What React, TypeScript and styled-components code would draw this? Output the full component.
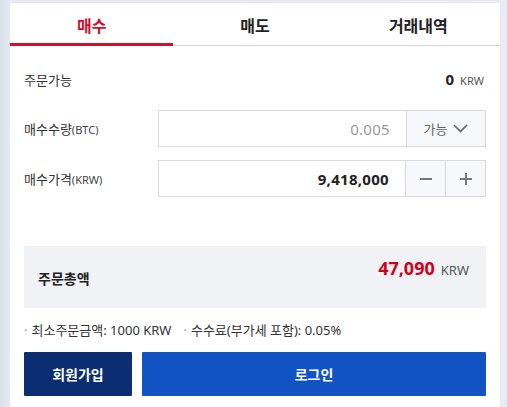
import React from "react";
import styled, { createGlobalStyle } from "styled-components";

const GlobalStyle = createGlobalStyle`
  html, body {
    margin: 0;
    padding: 0;
    background: #e8ebf1;
  }
  body {
    font-family: "Noto Sans", "Noto Sans CJK KR", sans-serif;
    color: #222;
  }
`;

const Page = styled.div`
  width: 507px;
  height: 407px;
  overflow: hidden;
  background: linear-gradient(to right, #dde1ea 0px, #e6e9f0 10px, #e8ebf1 100%);
  padding: 3px 7px 0 10px;
  box-sizing: border-box;
`;

const Panel = styled.div`
  background: #fff;
  height: 404px;
  display: flex;
  flex-direction: column;
`;

const TabBar = styled.div`
  display: flex;
  border-bottom: 1px solid #d4d4d8;
  height: 42px;
`;

const Tab = styled.div<{ $active?: boolean }>`
  flex: 1;
  height: 43px;
  box-sizing: border-box;
  padding-top: 4px;
  display: flex;
  align-items: center;
  justify-content: center;
  font-size: 16px;
  font-weight: 700;
  color: ${(p) => (p.$active ? "#d20f2c" : "#222")};
  border-bottom: 3px solid ${(p) => (p.$active ? "#d20f2c" : "transparent")};
`;

const Body = styled.div`
  padding: 0 14px;
  display: flex;
  flex-direction: column;
`;

const AvailRow = styled.div`
  margin-top: 22px;
  height: 22px;
  display: flex;
  align-items: center;
  justify-content: space-between;
`;

const Label = styled.div`
  font-size: 13px;
  color: #333;
  width: 134px;
  flex-shrink: 0;
`;

const Unit = styled.span`
  font-size: 11px;
  color: #444;
`;

const Amount = styled.div`
  padding-right: 2px;
  display: flex;
  align-items: baseline;
  gap: 6px;
`;

const AmountNum = styled.span<{ $size: number; $red?: boolean }>`
  font-size: ${(p) => p.$size}px;
  font-weight: 700;
  color: ${(p) => (p.$red ? "#d0021b" : "#222")};
`;

const AmountUnit = styled.span<{ $size: number }>`
  font-size: ${(p) => p.$size}px;
  color: #555;
`;

const InputRow = styled.div<{ $gap: number }>`
  margin-top: ${(p) => p.$gap}px;
  display: flex;
  align-items: center;
`;

const InputBox = styled.div`
  flex: 1;
  height: 37px;
  box-sizing: border-box;
  border: 1px solid #d9dae0;
  display: flex;
`;

const Field = styled.div<{ $muted?: boolean }>`
  flex: 1;
  display: flex;
  align-items: center;
  justify-content: flex-end;
  padding-right: 16px;
  font-size: 15px;
  letter-spacing: 0.3px;
  font-weight: ${(p) => (p.$muted ? 400 : 700)};
  color: ${(p) => (p.$muted ? "#999" : "#222")};
`;

const Addon = styled.div<{ $width: number }>`
  width: ${(p) => p.$width}px;
  border-left: 1px solid #d9dae0;
  background: #f7f8fb;
  display: flex;
  align-items: center;
  justify-content: center;
  gap: 6px;
  font-size: 13px;
  color: #666;
`;

const Summary = styled.div`
  margin-top: 49px;
  height: 62px;
  background: #f1f2f6;
  display: flex;
  justify-content: space-between;
  padding: 0 15px 0 14px;
`;

const SummaryLabel = styled.div`
  font-size: 14px;
  font-weight: 700;
  color: #222;
  align-self: center;
  padding-top: 2px;
`;

const SummaryAmount = styled(Amount)`
  padding-top: 10px;
  align-self: flex-start;
`;

const Notes = styled.div`
  margin-top: 12px;
  height: 18px;
  display: flex;
  align-items: center;
  font-size: 13px;
  color: #333;
  gap: 12px;
`;

const Note = styled.span`
  &::before {
    content: "·";
    color: #999;
    margin-right: 4px;
  }
`;

const Buttons = styled.div`
  margin-top: 14px;
  display: flex;
  gap: 10px;
`;

const Button = styled.button<{ $primary?: boolean }>`
  height: 44px;
  border: none;
  border-radius: 1px;
  font-family: inherit;
  font-size: 14px;
  font-weight: 700;
  color: #fff;
  background: ${(p) => (p.$primary ? "#1253c4" : "#0b2e72")};
  width: ${(p) => (p.$primary ? "auto" : "108px")};
  flex: ${(p) => (p.$primary ? 1 : "none")};
`;

const Chevron = () => (
  <svg width="15" height="9" viewBox="0 0 15 9">
    <polyline points="1,1 7.5,7.5 14,1" fill="none" stroke="#666" strokeWidth="1.6" />
  </svg>
);

const Minus = () => (
  <svg width="12" height="12" viewBox="0 0 12 12">
    <line x1="0" y1="6" x2="12" y2="6" stroke="#777" strokeWidth="2" />
  </svg>
);

const Plus = () => (
  <svg width="12" height="12" viewBox="0 0 12 12">
    <line x1="0" y1="6" x2="12" y2="6" stroke="#777" strokeWidth="2" />
    <line x1="6" y1="0" x2="6" y2="12" stroke="#777" strokeWidth="2" />
  </svg>
);

export default function App() {
  return (
    <Page>
      <GlobalStyle />
      <Panel>
        <TabBar>
          <Tab $active>매수</Tab>
          <Tab>매도</Tab>
          <Tab>거래내역</Tab>
        </TabBar>
        <Body>
          <AvailRow>
            <Label>주문가능</Label>
            <Amount>
              <AmountNum $size={15}>0</AmountNum>
              <AmountUnit $size={11}>KRW</AmountUnit>
            </Amount>
          </AvailRow>

          <InputRow $gap={20}>
            <Label>
              매수수량<Unit>(BTC)</Unit>
            </Label>
            <InputBox>
              <Field $muted>0.005</Field>
              <Addon $width={78}>
                가능 <Chevron />
              </Addon>
            </InputBox>
          </InputRow>

          <InputRow $gap={13}>
            <Label>
              매수가격<Unit>(KRW)</Unit>
            </Label>
            <InputBox>
              <Field>9,418,000</Field>
              <Addon $width={39}>
                <Minus />
              </Addon>
              <Addon $width={39}>
                <Plus />
              </Addon>
            </InputBox>
          </InputRow>

          <Summary>
            <SummaryLabel>주문총액</SummaryLabel>
            <SummaryAmount>
              <AmountNum $size={18} $red>
                47,090
              </AmountNum>
              <AmountUnit $size={13}>KRW</AmountUnit>
            </SummaryAmount>
          </Summary>

          <Notes>
            <Note>최소주문금액: 1000 KRW</Note>
            <Note>수수료(부가세 포함): 0.05%</Note>
          </Notes>

          <Buttons>
            <Button>회원가입</Button>
            <Button $primary>로그인</Button>
          </Buttons>
        </Body>
      </Panel>
    </Page>
  );
}
